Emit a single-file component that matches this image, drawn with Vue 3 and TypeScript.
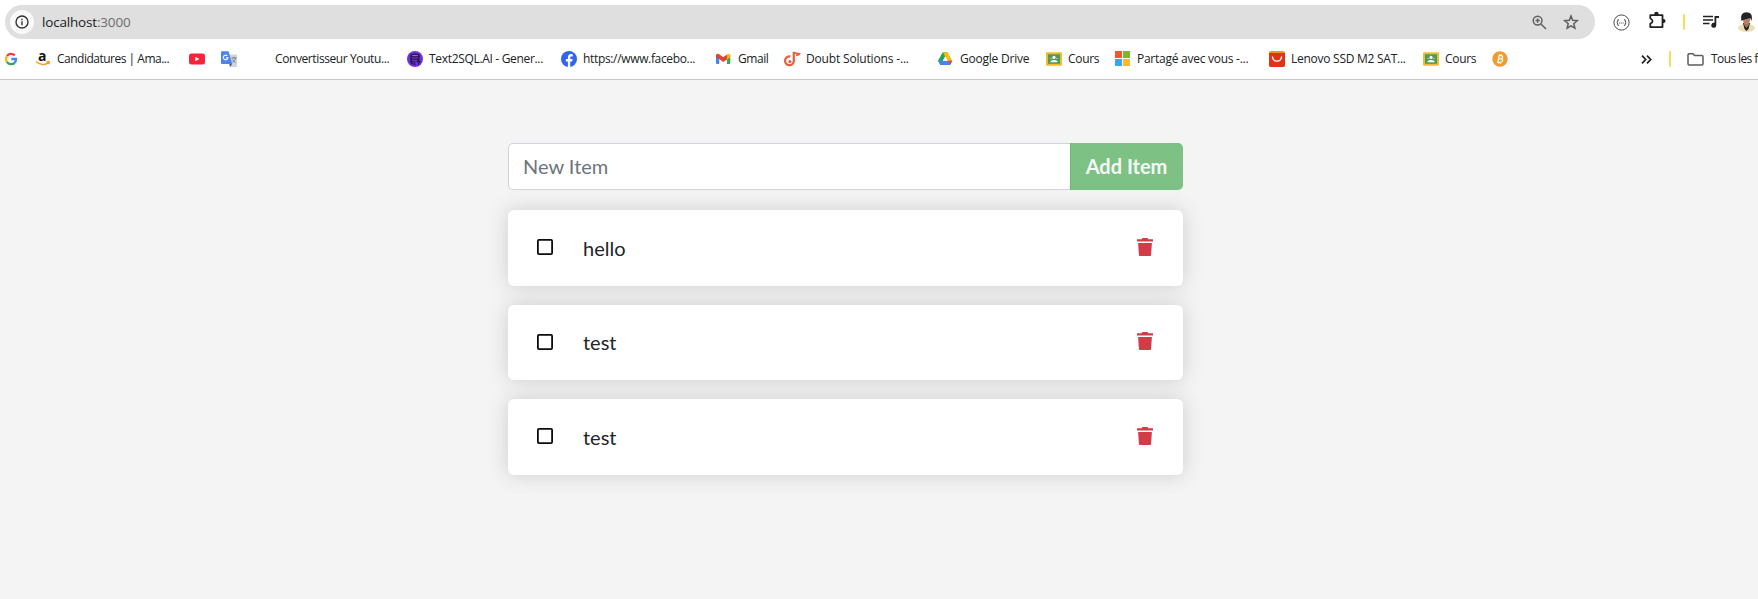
<script setup lang="ts">
import { ref } from 'vue'

interface Bookmark {
  icon: string
  label: string
  width: number
  tracking: number
}

const bookmarks: Bookmark[] = [
  { icon: 'google', label: '', width: 30, tracking: 0 },
  { icon: 'amazon', label: 'Candidatures | Ama...', width: 154, tracking: -0.5 },
  { icon: 'youtube', label: '', width: 32, tracking: 0 },
  { icon: 'translate', label: '', width: 32, tracking: 0 },
  { icon: 'blank', label: 'Convertisseur Youtu...', width: 154, tracking: -0.4 },
  { icon: 'sql', label: 'Text2SQL.AI - Gener...', width: 154, tracking: -0.32 },
  { icon: 'facebook', label: 'https://www.facebo...', width: 155, tracking: -0.34 },
  { icon: 'gmail', label: 'Gmail', width: 68, tracking: -0.45 },
  { icon: 'doubt', label: 'Doubt Solutions -...', width: 154, tracking: -0.17 },
  { icon: 'drive', label: 'Google Drive', width: 108, tracking: -0.22 },
  { icon: 'classroom', label: 'Cours', width: 69, tracking: -0.3 },
  { icon: 'microsoft', label: 'Partagé avec vous -...', width: 154, tracking: -0.26 },
  { icon: 'shop', label: 'Lenovo SSD M2 SAT...', width: 154, tracking: -0.26 },
  { icon: 'classroom', label: 'Cours', width: 69, tracking: -0.3 },
  { icon: 'bitcoin', label: '', width: 16, tracking: 0 },
]

const items = ref([
  { id: 1, name: 'hello' },
  { id: 2, name: 'test' },
  { id: 3, name: 'test' },
])
const draft = ref('')

function addItem() {
  const name = draft.value.trim()
  if (!name) return
  items.value.push({ id: Date.now(), name })
  draft.value = ''
}

function removeItem(id: number) {
  items.value = items.value.filter((item) => item.id !== id)
}
</script>

<template>
  <div class="window">
    <header class="chrome">
      <div class="toolbar">
        <div class="address">
          <span class="site-info">
            <svg width="14" height="14" viewBox="0 0 14 14" fill="none" stroke="#333" stroke-width="1.4">
              <circle cx="7" cy="7" r="6" />
              <path d="M7 6.3v3.9M7 3.7v1.5" />
            </svg>
          </span>
          <span class="url">localhost<span class="port">:3000</span></span>
          <svg class="zoom-icon" width="15" height="15" viewBox="0 0 15 15" fill="none" stroke="#5f6062" stroke-width="1.5">
            <circle cx="5.6" cy="5.6" r="4.4" />
            <path d="M9 9l5 5M3.5 5.6h4.2M5.6 3.5v4.2" />
          </svg>
          <svg width="16" height="16" viewBox="0 0 16 16" fill="none" stroke="#5f6062" stroke-width="1.5">
            <path d="M8 2l1.7 4.3 4.6.4-3.5 3 1.1 4.5L8 11.8l-3.9 2.4 1.1-4.5-3.5-3 4.6-.4z" />
          </svg>
        </div>
        <div class="extensions">
          <svg width="17" height="17" viewBox="0 0 17 17" fill="none" stroke="#4a4a4a">
            <circle cx="8.500" cy="8.500" r="7.600" />
            <path d="M5.900 5.500c-1.200 0-1.200.5-1.200 1.500s-.2 1.500-1 1.500c.8 0 1 .5 1 1.500s0 1.500 1.200 1.500M11.100 5.500c1.200 0 1.200.5 1.200 1.500s.2 1.500 1 1.500c-.8 0-1 .5-1 1.500s0 1.500-1.200 1.500" stroke-width="1.100" />
            <path d="M6.300 9h1M8.100 9h.9M9.800 9h.9" />
          </svg>
          <svg class="puzzle" width="17" height="17" viewBox="0 0 17 17">
            <path d="M1.300 3.100h12.200v12H1.300v-3.400c3-1.100 3-4 0-5.200z" fill="none" stroke="#202124" stroke-width="1.800" stroke-linejoin="round" />
            <path d="M5.200 3V2a2.200 2.200 0 0 1 4.400 0v1zM13.500 7h1a2 2 0 0 1 0 4h-1z" fill="#202124" />
          </svg>
          <span class="divider"></span>
          <svg class="media" width="16" height="13" viewBox="0 0 16 13">
            <path d="M0 1.500h10M0 5h10M0 8.500h6.500" stroke="#202124" stroke-width="1.700" />
            <path d="M11.500 1H16v2h-2.700v7.200a2.500 2.500 0 1 1-1.800-2.400z" fill="#202124" />
          </svg>
          <svg class="avatar" width="17" height="20" viewBox="0 0 17 20">
            <path d="M0 17c0-3 3-4.500 6-5h5c3.500.7 6 2 6 5-2 2-5 3-8.500 3S2 19 0 17z" fill="#e8dfb5" />
            <path d="M5 11h7l-1.500 6-2 2-2-2z" fill="#242126" />
            <path d="M6 8h5v5l-2.500 3L6 13z" fill="#a2705b" />
            <ellipse cx="8.500" cy="7.500" rx="3.700" ry="4.800" fill="#b98068" />
            <path d="M3.500 9C2.300 3 4.500.3 8.500.3s6.500 2.700 5 8.700l-1.300-3-3.700 1-3.500 1z" fill="#222326" />
          </svg>
        </div>
      </div>

      <nav class="bookmarks">
        <a v-for="(b, i) in bookmarks" :key="i" class="bookmark" :style="{ width: b.width + 'px' }">
          <svg class="favicon" width="16" height="16" viewBox="0 0 16 16">
            <g v-if="b.icon === 'google'" fill="none" stroke-width="2.300" transform="translate(-2)">
              <path d="M3.900 5.200A5 5 0 0 1 11.700 4.400" stroke="#e84435" />
              <path d="M3.900 5.200a5.200 5.200 0 0 0 0 5.700" stroke="#f7bb12" />
              <path d="M3.900 10.900a5 5 0 0 0 7.700.9" stroke="#35a753" />
              <path d="M8.300 8H13c0 1.600-.5 2.900-1.400 3.800" stroke="#4285f4" />
            </g>
            <g v-else-if="b.icon === 'amazon'">
              <text x="3" y="10.200" class="amazon-letter">a</text>
              <path d="M1 10.500c4 3.600 8.700 3.600 12 1.300M11.500 10.700l2.700.1-.6 2.500" fill="none" stroke="#f49b20" stroke-width="1.500" />
            </g>
            <g v-else-if="b.icon === 'youtube'">
              <rect y="2.500" width="16" height="11" rx="2.500" fill="#f8233b" />
              <path d="M6.300 5.700v4.600l4.100-2.300z" fill="#fff" />
            </g>
            <g v-else-if="b.icon === 'translate'">
              <path d="M6 3.500h10V16H9z" fill="#d2d4d7" />
              <path d="M8.500 13l2.500 0-2 3z" fill="#3949ab" />
              <path d="M1 .3h6.500L11.300 13H1a1 1 0 0 1-1-1V1.300a1 1 0 0 1 1-1z" fill="#4d83ef" />
              <path d="M6.300 4.900a2.300 2.300 0 1 0 .6 1.900H4.800" fill="none" stroke="#fff" stroke-width="1.100" />
              <path d="M10.500 7h5M13 5.800V7M14.500 7.200c-.5 2-1.500 3-3 4.200M11.300 8.500c.8 1.500 2 2.500 3.200 3.200" fill="none" stroke="#687786" stroke-width=".9" />
            </g>
            <g v-else-if="b.icon === 'sql'">
              <circle cx="8" cy="8" r="8" fill="#6b32dc" />
              <ellipse cx="8" cy="4.500" rx="4" ry="1.400" fill="#8a6bc4" stroke="#201532" stroke-width="1.100" />
              <path d="M4 4.500v7c0 1 2 1.800 4.500 1.600M12 4.500v2.700M4 7.300c1 1.100 5.500 1.300 8 .3M4 9.900c1 1 2.700 1.200 4.500 1.100M12.500 8.300l-2 2.200h2.200l-1.500 3" fill="none" stroke="#201532" stroke-width="1.200" />
            </g>
            <g v-else-if="b.icon === 'facebook'">
              <circle cx="8" cy="8" r="8" fill="#3264ef" />
              <path d="M6.900 15.900v-5.400H4.900V8h2V6.700c0-2.500 1.200-3.700 3.300-3.700.6 0 1.100 0 1.500.2v2.200h-1.100c-1.100 0-1.400.5-1.400 1.400V8h2.400l-.4 2.500h-2v5.400z" fill="#fff" />
            </g>
            <g v-else-if="b.icon === 'gmail'">
              <path d="M0 4h3.200v9H1a1 1 0 0 1-1-1z" fill="#4285f4" />
              <path d="M11 4h3.300v8a1 1 0 0 1-1 1H11z" fill="#34a853" />
              <path d="M11 3.500c1.200-1.300 3.300-1 3.300.8V6L11 8.500z" fill="#fbbc04" />
              <path d="M0 4.300C0 2.500 2 2.200 3.200 3.300l4 3L11 3.400v5L7.200 11 3.200 8 0 6z" fill="#e34133" />
            </g>
            <g v-else-if="b.icon === 'doubt'" fill="none" stroke="#e75e3b">
              <path d="M9.800 1v9.500a4.400 4.400 0 1 1-3.500-5" stroke-width="2.200" />
              <circle cx="5.800" cy="10.400" r="1.500" fill="#e75e3b" stroke="none" />
              <path d="M9.200 1.200c2 1.300 3.500.8 6.300 1.500-.5 1.300-1.800 1.700-3.500 1.400" stroke-width="1.700" />
            </g>
            <g v-else-if="b.icon === 'drive'">
              <path d="M4.800 1.300h4.700L5 9.700 2.500 14 0 9.700z" fill="#20a55a" />
              <path d="M4.800 1.300h4.700l4.800 8.400h-4.700z" fill="#fbbc05" />
              <path d="M0 9.800h14.300L12 14H2.400z" fill="#4285f4" />
              <path d="M10 9.800h4.300L12 14z" fill="#ea4335" />
              <path d="M7.100 5.700l2.400 4.100H4.800z" fill="#fff" />
            </g>
            <g v-else-if="b.icon === 'classroom'">
              <rect y="1.300" width="16" height="13.500" rx="1" fill="#efbd2c" />
              <rect x="2" y="3.300" width="12" height="9.500" fill="#4d9b58" />
              <circle cx="8" cy="6.400" r="1.600" fill="#fff" />
              <path d="M4.300 11.200c0-3 7.400-3 7.400 0z" fill="#fff" />
              <circle cx="5" cy="7.500" r=".8" fill="#a9cfaf" />
              <circle cx="11" cy="7.500" r=".8" fill="#a9cfaf" />
            </g>
            <g v-else-if="b.icon === 'microsoft'">
              <path d="M0 0h7v7H0z" fill="#f1582b" />
              <path d="M8 0h7v7H8z" fill="#80b91d" />
              <path d="M0 8h7v7H0z" fill="#38a5ee" />
              <path d="M8 8h7v7H8z" fill="#fbbd1c" />
            </g>
            <g v-else-if="b.icon === 'shop'">
              <rect width="16" height="16" rx="2" fill="#f5912b" />
              <path d="M0 2h16v12a2 2 0 0 1-2 2H2a2 2 0 0 1-2-2z" fill="#df3517" />
              <path d="M3.500 6c.7 5.500 8.300 5.500 9 0" fill="none" stroke="#fff" stroke-width="1.400" stroke-linecap="round" />
            </g>
            <g v-else-if="b.icon === 'bitcoin'">
              <circle cx="8" cy="8" r="7.700" fill="#f09a32" />
              <path d="M6.700 4.600h2.500c2.300.2 1.700 3-.3 3.200H6.600M6.200 7.800h3c2.400.3 1.600 3.500-.7 3.500H5M7.100 4.500l-1.200 6.800M7.900 3.200v1.300M9.600 3.500v1.200M6.900 11.300v1.500M8.600 11.300v1.500" fill="none" stroke="#fff" stroke-width="1.200" />
            </g>
          </svg>
          <span v-if="b.label" class="label" :style="{ letterSpacing: b.tracking + 'px' }">{{ b.label }}</span>
        </a>
        <div class="overflow">
          <svg width="11" height="9" viewBox="0 0 11 9" fill="none" stroke="#202124" stroke-width="1.700">
            <path d="M1 .7l3.700 3.800L1 8.300M6 .7l3.700 3.800L6 8.300" />
          </svg>
          <span class="divider"></span>
          <svg class="folder" width="17" height="13" viewBox="0 0 17 13" fill="none" stroke="#5b5c5e" stroke-width="1.500">
            <path d="M1 2c0-.7.400-1.200 1.100-1.200H6l1.600 1.700h7.200c.7 0 1.200.5 1.200 1.200v7.100c0 .7-.5 1.200-1.200 1.200H2.100c-.7 0-1.100-.5-1.100-1.200z" />
          </svg>
          <span class="all-label">Tous les favoris</span>
        </div>
      </nav>
    </header>

    <main class="page">
      <div class="todo">
        <form class="entry" @submit.prevent="addItem">
          <input v-model="draft" class="entry-input" placeholder="New Item" aria-label="New item" />
          <button class="entry-button" type="submit">Add Item</button>
        </form>
        <article v-for="item in items" :key="item.id" class="item">
          <button class="check" aria-label="Mark item as complete">
            <svg width="16" height="16" viewBox="0 0 16 16">
              <rect x=".9" y=".9" width="14.200" height="14.200" rx="1" fill="none" stroke="#0c0c12" stroke-width="1.800" />
            </svg>
          </button>
          <span class="name">{{ item.name }}</span>
          <button class="remove" aria-label="Remove item" @click="removeItem(item.id)">
            <svg width="16" height="18" viewBox="0 0 16 18" fill="#d23c49">
              <path d="M0 1.300h4.700L5.500 0h5l.8 1.300H16v2.300H0zM1.100 5h13.800l-.8 11.700c0 .8-.6 1.300-1.300 1.300H3.200c-.7 0-1.300-.5-1.300-1.300z" />
            </svg>
          </button>
        </article>
      </div>
    </main>
  </div>
</template>

<style>
body {
  background: #f4f4f4;
  overflow: hidden;
}
</style>

<style scoped>
.window {
  height: 599px;
  overflow: hidden;
  background: #f4f4f4;
}
.window * {
  box-sizing: border-box;
}
svg {
  display: block;
  flex: none;
  overflow: visible;
}
.chrome {
  height: 80px;
  background: #fff;
  border-bottom: 1px solid #c9c9c9;
  font-family: "Open Sans", "Noto Sans", sans-serif;
  color: #202124;
  white-space: nowrap;
  overflow: hidden;
}
.toolbar {
  display: flex;
  padding: 5px 0 0 5px;
  height: 39px;
}
.address {
  display: flex;
  align-items: center;
  flex: none;
  width: 1590px;
  height: 34px;
  padding: 0 16px 0 5px;
  border-radius: 17px;
  background: #dfdfdf;
}
.site-info {
  display: grid;
  place-items: center;
  width: 24px;
  height: 24px;
  border-radius: 50%;
  background: #fafafa;
}
.url {
  margin-left: 8px;
  font-size: 13.5px;
  letter-spacing: -0.18px;
}
.port {
  color: #6c6d6f;
}
.zoom-icon {
  margin: 0 16px 0 auto;
}
.extensions {
  display: flex;
  align-items: center;
  flex: none;
  height: 34px;
  margin-left: 18px;
}
.puzzle {
  margin: -3px 0 0 19px;
}
.divider {
  width: 2px;
  height: 16px;
  border-radius: 1px;
  background: #fbdb59;
}
.extensions .divider {
  margin-left: 17px;
}
.media {
  margin: -2px 0 0 18px;
}
.avatar {
  margin-left: 19px;
}
.bookmarks {
  display: flex;
  align-items: center;
  height: 40px;
  padding-left: 5px;
}
.bookmark {
  display: flex;
  align-items: center;
  flex: none;
  gap: 6px;
}
.label,
.all-label {
  font-size: 12px;
  line-height: 16px;
  white-space: pre;
}
.amazon-letter {
  font: bold 14px "Open Sans", sans-serif;
  fill: #111;
}
.overflow {
  display: flex;
  align-items: center;
  flex: none;
  margin-left: 133px;
}
.overflow .divider {
  margin-left: 17px;
}
.folder {
  margin-left: 16px;
}
.all-label {
  margin-left: 7px;
  letter-spacing: -0.6px;
}
.page {
  padding-top: 63px;
  font-family: Lato, sans-serif;
}
.todo {
  width: 675px;
  margin-left: 508px;
}
.entry {
  display: flex;
  height: 47px;
  margin-bottom: 20px;
}
.entry-input {
  flex: 1;
  min-width: 0;
  padding: 0 14px 2px;
  border: 1px solid #ced4da;
  border-right: 0;
  border-radius: 5px 0 0 5px;
  outline: 0;
  background: #fff;
  font: 20px Lato, sans-serif;
  color: #495057;
}
.entry-input::placeholder {
  color: #6c757d;
  opacity: 1;
}
.entry-button {
  width: 113px;
  padding: 0 1px 2px 0;
  border: 0;
  border-left: 1px solid #6cb975;
  border-radius: 0 5px 5px 0;
  background: #7dc185;
  color: #f5faf6;
  font: bold 20px Lato, sans-serif;
}
.item {
  display: flex;
  align-items: center;
  height: 75.75px;
  margin-bottom: 18.75px;
  padding: 0 30px 0 29px;
  border-radius: 6px;
  background: #fff;
  box-shadow: 0 0 20px #ccc;
  font-size: 20px;
  color: #212529;
}
.check,
.remove {
  padding: 0;
  border: 0;
  background: none;
}
.name {
  flex: 1;
  margin: 0 0 0 30px;
}
.remove {
  margin-top: -2px;
}
.check {
  margin-top: -1px;
}
</style>
